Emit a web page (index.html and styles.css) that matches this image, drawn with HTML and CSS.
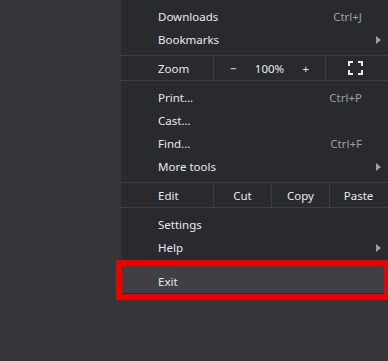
FILE: index.html
```html
<!DOCTYPE html>
<html lang="en">
<head>
    <meta charset="UTF-8">
    <meta name="viewport" content="width=device-width, initial-scale=1.0">
    <title>Menu</title>
    <link rel="stylesheet" href="styles.css">
</head>
<body>
    <div class="page">
        <div class="menu">
            <div class="menu-item"><span>Downloads</span><span class="shortcut">Ctrl+J</span></div>
            <div class="menu-item sub"><span>Bookmarks</span><span class="arrow"></span></div>
            <div class="sep sep-above"></div>
            <div class="menu-row">
                <div class="row-label">Zoom</div>
                <div class="zoom-ctrl">
                    <span>&minus;</span>
                    <span>100%</span>
                    <span>+</span>
                </div>
                <div class="full-cell">
                    <svg width="15" height="14" viewBox="0 0 15 14">
                        <path d="M1 5V1h4M10 1h4v4M14 9v4h-4M5 13H1V9" fill="none" stroke="#e8eaed" stroke-width="2"/>
                    </svg>
                </div>
            </div>
            <div class="sep sep-below"></div>
            <div class="menu-item"><span>Print...</span><span class="shortcut">Ctrl+P</span></div>
            <div class="menu-item"><span>Cast...</span></div>
            <div class="menu-item"><span>Find...</span><span class="shortcut">Ctrl+F</span></div>
            <div class="menu-item sub"><span>More tools</span><span class="arrow"></span></div>
            <div class="sep sep-above"></div>
            <div class="menu-row">
                <div class="row-label">Edit</div>
                <div class="edit-cell">Cut</div>
                <div class="edit-cell">Copy</div>
                <div class="edit-cell">Paste</div>
            </div>
            <div class="sep sep-below"></div>
            <div class="menu-item"><span>Settings</span></div>
            <div class="menu-item sub"><span>Help</span><span class="arrow"></span></div>
            <div class="sep"></div>
            <div class="menu-item exit"><span>Exit</span></div>
        </div>
        <!-- annotation box round Exit -->
        <div class="highlight-box"></div>
    </div>
</body>
</html>
```

FILE: styles.css
```css
body {
    margin: 0;
    padding: 0;
    background: #36373b;
    font-family: "Noto Sans", "Open Sans", sans-serif;
    overflow: hidden;
}

.page {
    position: relative;
    width: 388px;
    height: 361px;
    overflow: hidden;
}

/* Menu panel */
.menu {
    margin-left: 121px;
    width: 269px;
    padding: 5px 0 4px;
    background: #292a2d;
    color: #e8eaed;
    font-size: 11.5px;
}

.menu-item {
    height: 23px;
    display: flex;
    align-items: center;
    justify-content: space-between;
    padding: 0 28px 0 37px;
}

.menu-item.sub {
    padding-right: 9px;
}

.shortcut {
    color: #9aa0a6;
}

.arrow {
    width: 0;
    height: 0;
    border-top: 4px solid transparent;
    border-bottom: 4px solid transparent;
    border-left: 5px solid #9aa0a6;
}

.menu-item.exit {
    height: 27px;
    margin-top: 2px;
    padding-top: 3px;
    box-sizing: border-box;
    background: #3f4044;
}

.sep {
    height: 1px;
    margin: 4px 0 2px;
    background: #3e3f43;
}

.sep-above {
    margin: 4px 0 0;
}

.sep-below {
    margin: 0 0 5px;
}

/* Zoom / Edit rows */
.menu-row {
    display: flex;
    height: 24px;
}

.row-label {
    width: 55px;
    padding-left: 37px;
    display: flex;
    align-items: center;
    border-right: 1px solid #3e3f43;
}

.zoom-ctrl {
    width: 112px;
    display: flex;
    align-items: center;
    justify-content: space-between;
    padding: 0 16px 0 16px;
    box-sizing: border-box;
    border-right: 1px solid #3e3f43;
}

.full-cell {
    flex: 1;
    display: flex;
    align-items: center;
    justify-content: center;
    padding-right: 6px;
}

.edit-cell {
    width: 57px;
    display: flex;
    align-items: center;
    justify-content: center;
    border-right: 1px solid #3e3f43;
}

.edit-cell:last-child {
    border-right: none;
}

/* Red annotation */
.highlight-box {
    position: absolute;
    left: 116px;
    top: 260px;
    width: 262px;
    height: 28px;
    border: 6px solid #ee0000;
}
```
